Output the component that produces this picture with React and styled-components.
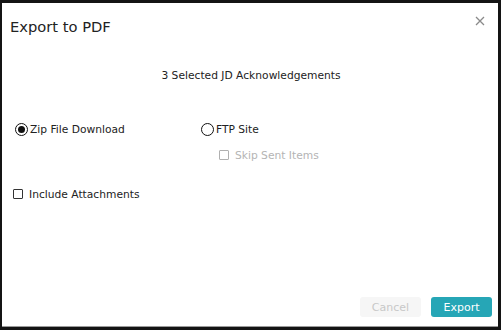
import React from 'react';
import styled, { createGlobalStyle } from 'styled-components';

const GlobalStyle = createGlobalStyle`
  html, body {
    margin: 0;
    padding: 0;
    background: #141414;
  }
  body {
    font-family: "DejaVu Sans", Verdana, sans-serif;
  }
`;

const Frame = styled.div`
  width: 501px;
  height: 330px;
  box-sizing: border-box;
  padding: 3px 3px 3px 2px;
  background: #141414;
`;

const Dialog = styled.div`
  height: 100%;
  box-sizing: border-box;
  background: #fff;
  border-bottom: 1px solid #9a9a9a;
  display: flex;
  flex-direction: column;
  color: #222;
`;

const Header = styled.div`
  display: flex;
  align-items: center;
  justify-content: space-between;
  padding: 11px 11px 0 8px;
  height: 24px;
`;

const Title = styled.h1`
  margin: 0;
  font-size: 14.7px;
  font-weight: normal;
  color: #222;
`;

const Close = styled.button`
  border: none;
  background: none;
  padding: 0;
  width: 14px;
  height: 14px;
  display: flex;
  align-items: center;
  justify-content: center;
  margin-top: -10px;
`;

const Body = styled.div`
  flex: 1;
  display: flex;
  flex-direction: column;
  padding: 0 10px 0 10px;
  font-size: 10.7px;
`;

const Summary = styled.div`
  text-align: center;
  margin-top: 31px;
  margin-left: 2px;
`;

const Options = styled.div`
  display: grid;
  grid-template-columns: 186px 1fr;
  row-gap: 10px;
  margin-top: 39px;
  padding-left: 3px;
`;

const Option = styled.label`
  display: flex;
  align-items: center;
  gap: ${p => (p.$box ? '6px' : '2px')};
  color: ${p => (p.$disabled ? '#b4b4b4' : '#222')};
  grid-column: ${p => p.$col || 'auto'};
  padding-left: ${p => p.$indent || 0}px;
  height: 16px;
`;

const Radio = styled.span`
  width: 13px;
  height: 13px;
  box-sizing: border-box;
  border: 1.5px solid #111;
  border-radius: 50%;
  display: flex;
  align-items: center;
  justify-content: center;

  &::after {
    content: '';
    width: 7px;
    height: 7px;
    border-radius: 50%;
    background: ${p => (p.$checked ? '#111' : 'transparent')};
  }
`;

const Box = styled.span`
  width: 10px;
  height: 10px;
  box-sizing: border-box;
  border: 1px solid ${p => (p.$disabled ? '#b0b0b0' : '#333')};
  border-radius: 1px;
  background: #fff;
`;

const Attach = styled(Option)`
  margin-top: 23px;
  padding-left: 1px;
`;

const Footer = styled.div`
  display: flex;
  justify-content: flex-end;
  gap: 10px;
  padding: 0 6px 9px 0;
`;

const Button = styled.button`
  height: 20px;
  min-width: 61px;
  border: none;
  border-radius: 3px;
  font-family: "DejaVu Sans", Verdana, sans-serif;
  font-size: 11px;
  background: ${p => (p.$primary ? '#26a6b6' : '#f6f6f6')};
  color: ${p => (p.$primary ? '#fff' : '#c8c8c8')};
  padding: 0 10px;
`;

export default function App() {
  return (
    <>
      <GlobalStyle />
      <Frame>
        <Dialog>
          <Header>
            <Title>Export to PDF</Title>
            <Close aria-label="Close">
              <svg width="10" height="10" viewBox="0 0 10 10">
                <path d="M1 1L9 9M9 1L1 9" stroke="#8a8a8a" strokeWidth="1.3" />
              </svg>
            </Close>
          </Header>
          <Body>
            <Summary>3 Selected JD Acknowledgements</Summary>
            <Options>
              <Option>
                <Radio $checked />
                Zip File Download
              </Option>
              <Option>
                <Radio />
                FTP Site
              </Option>
              <Option $box $disabled $col="2" $indent={18}>
                <Box $disabled />
                Skip Sent Items
              </Option>
            </Options>
            <Attach $box>
              <Box />
              Include Attachments
            </Attach>
          </Body>
          <Footer>
            <Button>Cancel</Button>
            <Button $primary>Export</Button>
          </Footer>
        </Dialog>
      </Frame>
    </>
  );
}
